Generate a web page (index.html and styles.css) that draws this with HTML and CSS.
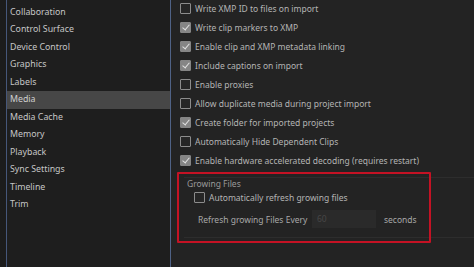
FILE: index.html
```html
<!DOCTYPE html>
<html>
<head>
<meta charset="utf-8">
<link rel="stylesheet" href="styles.css">
</head>
<body>
<div class="app">
  <div class="sidebar">
    <ul class="list">
      <li class="item partial">Capture</li>
      <li class="item">Collaboration</li>
      <li class="item">Control Surface</li>
      <li class="item">Device Control</li>
      <li class="item">Graphics</li>
      <li class="item">Labels</li>
      <li class="item selected">Media</li>
      <li class="item">Media Cache</li>
      <li class="item">Memory</li>
      <li class="item">Playback</li>
      <li class="item">Sync Settings</li>
      <li class="item">Timeline</li>
      <li class="item">Trim</li>
    </ul>
  </div>
  <div class="content">
    <label class="opt"><span class="box"></span>Write XMP ID to files on import</label>
    <label class="opt"><span class="box on"></span>Write clip markers to XMP</label>
    <label class="opt"><span class="box on"></span>Enable clip and XMP metadata linking</label>
    <label class="opt"><span class="box on"></span>Include captions on import</label>
    <label class="opt"><span class="box"></span>Enable proxies</label>
    <label class="opt"><span class="box"></span>Allow duplicate media during project import</label>
    <label class="opt"><span class="box on"></span>Create folder for imported projects</label>
    <label class="opt"><span class="box"></span>Automatically Hide Dependent Clips</label>
    <label class="opt"><span class="box on"></span>Enable hardware accelerated decoding (requires restart)</label>
    <div class="group">
      <div class="group-title">Growing Files</div>
      <label class="opt sub"><span class="box"></span>Automatically refresh growing files</label>
      <div class="refresh">
        <span class="refresh-label">Refresh growing Files Every</span>
        <span class="field">60</span>
        <span class="unit">seconds</span>
      </div>
    </div>
    <div class="highlight"></div>
  </div>
</div>
</body>
</html>
```

FILE: styles.css
```css
* { box-sizing: border-box; }
html, body { margin: 0; padding: 0; }
body {
  width: 474px;
  height: 267px;
  overflow: hidden;
  background: #1c1c1c;
  font-family: "Noto Sans", "Open Sans", sans-serif;
  font-size: 8.5px;
  color: #b9b9b9;
}
.app {
  display: flex;
  height: 267px;
  padding-left: 6px;
}
.sidebar {
  width: 165px;
  flex: none;
  background: #1e1e1e;
  border-left: 1px solid #46577a;
  border-right: 1px solid #4f6286;
  overflow: hidden;
}
.list {
  list-style: none;
  margin: -14px 0 0 0;
  padding: 0;
}
.item {
  height: 17.5px;
  line-height: 17.5px;
  padding-left: 3px;
  color: #c6c6c6;
  font-size: 8.8px;
  white-space: nowrap;
}
.item.selected {
  background: #474747;
  color: #cfcfcf;
}
.content {
  position: relative;
  flex: 1;
  background: #232323;
  padding: 0 0 0 9px;
  overflow: hidden;
}
.opt {
  display: flex;
  align-items: center;
  height: 19px;
  gap: 4px;
  white-space: nowrap;
  color: #b4b4b4;
}
.content > .opt:first-child { margin-top: -1px; }
.box {
  width: 11px;
  height: 11px;
  flex: none;
  border: 1px solid #8c8c8c;
  border-radius: 1px;
  background: #262626;
  position: relative;
}
.box.on {
  background: #858585;
  border-color: #858585;
}
.box.on::after {
  content: "";
  position: absolute;
  left: 3px;
  top: 0px;
  width: 3px;
  height: 6px;
  border-right: 1.5px solid #e2e2e2;
  border-bottom: 1.5px solid #e2e2e2;
  transform: rotate(40deg);
}
.group {
  margin-top: 7px;
  margin-left: 4px;
  border-top: 1px solid #2d2d2d;
  border-bottom: 1px solid #2d2d2d;
  height: 61px;
  padding: 0 0 0 3px;
}
.group-title {
  height: 11px;
  line-height: 11px;
  color: #9a9a9a;
}
.opt.sub {
  margin-left: 7px;
  margin-top: -1px;
}
.refresh {
  display: flex;
  align-items: center;
  margin-top: 3px;
  margin-left: 11px;
  height: 18px;
  white-space: nowrap;
}
.refresh-label { color: #a8a8a8; width: 114px; flex: none; }
.field {
  width: 64px;
  height: 18px;
  line-height: 18px;
  flex: none;
  background: #2a2a2a;
  color: #474747;
  padding-left: 5px;
}
.unit { margin-left: 8px; color: #a8a8a8; }
.highlight {
  position: absolute;
  left: 6px;
  top: 172px;
  width: 254px;
  height: 71px;
  border: 2px solid #c41224;
  border-radius: 1px;
}
```
